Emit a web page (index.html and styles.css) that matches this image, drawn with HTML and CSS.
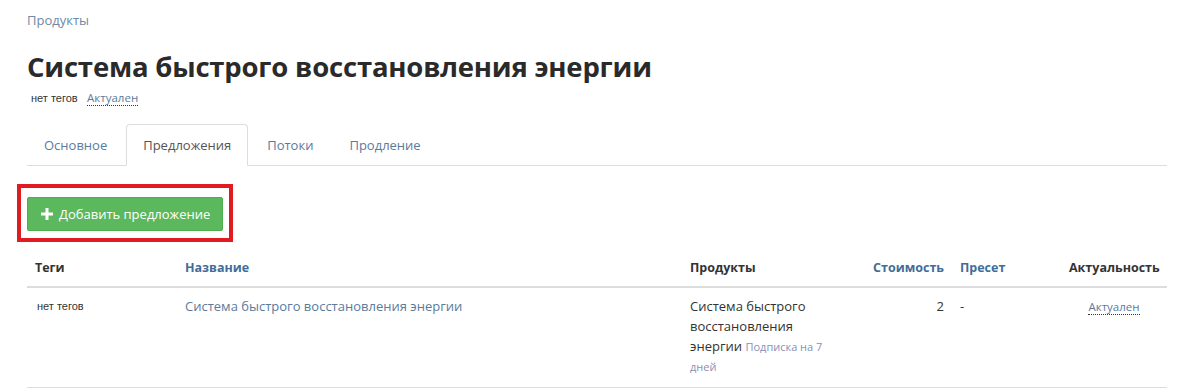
FILE: index.html
```html
<!DOCTYPE html>
<html lang="ru">
<head>
    <meta charset="UTF-8">
    <meta name="viewport" content="width=device-width, initial-scale=1.0">
    <title>Система быстрого восстановления энергии</title>
    <link rel="stylesheet" href="styles.css">
</head>
<body>
    <div class="page">
        <div class="breadcrumb"><a href="#">Продукты</a></div>

        <h1>Система быстрого восстановления энергии</h1>
        <div class="meta">
            <span class="tags">нет тегов</span>
            <a href="#" class="status">Актуален</a>
        </div>

        <ul class="tabs">
            <li><a href="#">Основное</a></li>
            <li class="active"><a href="#">Предложения</a></li>
            <li><a href="#">Потоки</a></li>
            <li><a href="#">Продление</a></li>
        </ul>

        <div class="highlight">
            <button class="btn-add">
                <svg class="plus" width="12" height="12" viewBox="0 0 12 12">
                    <path d="M4.5 0h3v4.5H12v3H7.5V12h-3V7.5H0v-3h4.5z" fill="#fff"/>
                </svg>
                Добавить предложение
            </button>
        </div>

        <table class="offers">
            <colgroup>
                <col style="width: 150px">
                <col style="width: 505px">
                <col style="width: 165px">
                <col style="width: 105px">
                <col style="width: 109px">
                <col style="width: 106px">
            </colgroup>
            <thead>
                <tr>
                    <th>Теги</th>
                    <th><a href="#">Название</a></th>
                    <th>Продукты</th>
                    <th class="num"><a href="#">Стоимость</a></th>
                    <th><a href="#">Пресет</a></th>
                    <th class="right">Актуальность</th>
                </tr>
            </thead>
            <tbody>
                <tr>
                    <td class="tags">нет тегов</td>
                    <td><a href="#">Система быстрого восстановления энергии</a></td>
                    <td><span class="product">Система быстрого восстановления энергии</span> <span class="preset">Подписка на 7 дней</span></td>
                    <td class="num">2</td>
                    <td>-</td>
                    <td class="center"><a href="#" class="status">Актуален</a></td>
                </tr>
            </tbody>
        </table>
    </div>
</body>
</html>
```

FILE: styles.css
```css
:root {
    --text-color: #333;
    --link-color: #5b7b9c;
    --sort-color: #3f6d99;
    --border-color: #ddd;
    --green: #5cb85c;
    --marker: #e11b22;
}

* {
    box-sizing: border-box;
    margin: 0;
    padding: 0;
}

body {
    font-family: 'Open Sans', 'Noto Sans', sans-serif;
    color: var(--text-color);
    background: #fff;
    font-size: 13px;
}

a {
    color: var(--link-color);
    text-decoration: none;
}

.page {
    padding: 11px 17px 0 27px;
}

.breadcrumb {
    font-size: 13px;
    line-height: 18px;
}

.breadcrumb a {
    color: #6f8aa4;
}

h1 {
    margin-top: 21px;
    font-size: 27.5px;
    line-height: 34px;
    font-weight: 700;
    color: #2a2a2a;
    letter-spacing: -0.2px;
}

.meta {
    margin-top: 4px;
    line-height: 18px;
    padding-left: 4px;
}

.tags {
    font-family: 'Liberation Sans', Arial, sans-serif;
    font-size: 11px;
    color: #333;
}

.meta .tags {
    margin-right: 6px;
}

.status {
    font-size: 11.5px;
    border-bottom: 1px dotted #333;
}

.tabs {
    list-style: none;
    display: flex;
    margin-top: 17px;
    border-bottom: 1px solid var(--border-color);
}

.tabs li {
    margin-right: 2px;
    margin-bottom: -1px;
}

.tabs a {
    display: block;
    padding: 10px 16px;
    font-size: 13px;
    line-height: 20px;
    border: 1px solid transparent;
    border-radius: 4px 4px 0 0;
}

.tabs .active a {
    color: #555;
    border-color: var(--border-color);
    border-bottom-color: #fff;
    background: #fff;
}

.highlight {
    display: inline-block;
    margin-top: 18px;
    margin-left: -10px;
    padding: 9px 6px 7px;
    border: 4px solid var(--marker);
}

.btn-add {
    display: flex;
    align-items: center;
    height: 34px;
    padding: 0 12px 0 13px;
    background: var(--green);
    border: 1px solid #4cae4c;
    border-radius: 2px;
    color: #fff;
    font-family: inherit;
    font-size: 13px;
}

.plus {
    margin-right: 6px;
}

.offers {
    width: 1140px;
    margin-top: 8px;
    border-collapse: collapse;
    table-layout: fixed;
}

.offers th,
.offers td {
    padding: 8px;
    line-height: 20px;
    text-align: left;
    vertical-align: top;
}

.offers th {
    font-weight: 700;
    font-size: 12.5px;
    border-bottom: 2px solid var(--border-color);
}

.offers th a {
    color: var(--sort-color);
}

.offers td {
    border-bottom: 1px solid var(--border-color);
    padding-bottom: 11px;
}

.offers .num {
    text-align: right;
}

.offers .right {
    text-align: right;
}

.offers .center {
    text-align: center;
}

.offers td.tags {
    padding-left: 10px;
}

.preset {
    font-size: 11px;
    line-height: 14px;
    color: #8b8fb6;
}
```
